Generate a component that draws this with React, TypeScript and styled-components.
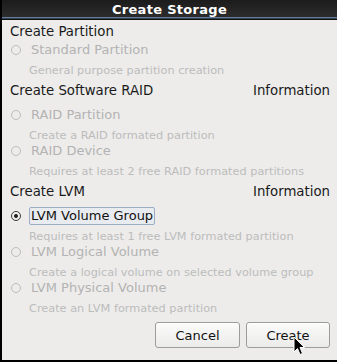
import React from "react";
import styled, { createGlobalStyle, css } from "styled-components";

const Global = createGlobalStyle`
  html, body { margin: 0; padding: 0; background: #ffffff; }
  body { font-family: "DejaVu Sans", "Liberation Sans", sans-serif; }
  * { box-sizing: border-box; }
`;

const Window = styled.div`
  width: 337px;
  height: 362px;
  display: flex;
  flex-direction: column;
  border-left: 2px solid #000;
  border-bottom: 2px solid #000;
  background: #edeceb;
`;

const TitleBar = styled.div`
  height: 20px;
  flex: none;
  display: flex;
  align-items: center;
  justify-content: center;
  padding-bottom: 2px;
  color: #ffffff;
  font-weight: bold;
  font-size: 13px;
  letter-spacing: 0.3px;
  background: linear-gradient(
    to bottom,
    #1c1c1c 0px,
    #2c2c2c 17px,
    #6f88a4 17px,
    #55708e 18px,
    #101010 19px,
    #101010 20px
  );
`;

const Body = styled.div`
  flex: 1;
  display: flex;
  flex-direction: column;
  padding: 1px 7px 0 8px;
  color: #000;
`;

const HeaderRow = styled.div<{ $gap?: number }>`
  height: 20px;
  margin-top: ${(p) => p.$gap ?? 0}px;
  display: flex;
  align-items: center;
  justify-content: space-between;
  font-size: 13.3px;
  color: #1a1a1a;
`;

const RadioRow = styled.div<{ $gap: number }>`
  height: 16px;
  margin-top: ${(p) => p.$gap}px;
  display: flex;
  align-items: center;
`;

const RadioCircle = styled.span<{ $checked?: boolean }>`
  width: 10px;
  height: 10px;
  margin-left: 1px;
  margin-right: 8px;
  border-radius: 50%;
  flex: none;
  position: relative;
  ${(p) =>
    p.$checked
      ? css`
          border: 1px solid #3a3a3a;
          background: radial-gradient(circle at 50% 40%, #ffffff, #e4e4e4);
          &::after {
            content: "";
            position: absolute;
            left: 2px;
            top: 2px;
            width: 4px;
            height: 4px;
            border-radius: 50%;
            background: #1c1c1c;
          }
        `
      : css`
          border: 1px solid #bdbdbc;
          background: transparent;
        `}
`;

const RadioLabel = styled.span<{ $disabled?: boolean; $focused?: boolean }>`
  font-size: 13px;
  line-height: 14px;
  padding: 1px;
  border-radius: 2px;
  border: 1px solid transparent;
  color: ${(p) => (p.$disabled ? "#b3b3b2" : "#111")};
  ${(p) =>
    p.$focused &&
    css`
      border-color: #9badc4;
      background: #e8ebef;
    `}
`;

const Desc = styled.div`
  height: 16px;
  margin-top: 4px;
  padding-left: 19px;
  display: flex;
  align-items: center;
  font-size: 11.3px;
  color: #bcbcbb;
  white-space: nowrap;
`;

const ButtonRow = styled.div`
  display: flex;
  justify-content: flex-end;
  gap: 6px;
  margin-top: 6px;
`;

const Button = styled.button<{ $w: number }>`
  position: relative;
  width: ${(p) => p.$w}px;
  height: 26px;
  border: 1px solid #9c9c9b;
  border-radius: 3px;
  background: linear-gradient(to bottom, #fbfbfb, #ebebea);
  font-family: "DejaVu Sans", "Liberation Sans", sans-serif;
  font-size: 13px;
  color: #111;
  padding: 0;
  box-shadow: inset 0 1px 0 #ffffff;
`;

const Cursor = styled.svg`
  position: absolute;
  left: 46px;
  top: 13px;
  width: 13px;
  height: 20px;
  pointer-events: none;
`;

type OptionProps = {
  label: string;
  desc: string;
  gap: number;
  checked?: boolean;
};

function Option({ label, desc, gap, checked }: OptionProps) {
  return (
    <>
      <RadioRow $gap={gap}>
        <RadioCircle $checked={checked} />
        <RadioLabel $disabled={!checked} $focused={checked}>
          {label}
        </RadioLabel>
      </RadioRow>
      <Desc>{desc}</Desc>
    </>
  );
}

export default function App() {
  return (
    <>
      <Global />
      <Window>
        <TitleBar>Create Storage</TitleBar>
        <Body>
          <HeaderRow>
            <span>Create Partition</span>
          </HeaderRow>
          <Option gap={1} label="Standard Partition" desc="General purpose partition creation" />

          <HeaderRow $gap={2}>
            <span>Create Software RAID</span>
            <span>Information</span>
          </HeaderRow>
          <Option gap={7} label="RAID Partition" desc="Create a RAID formated partition" />
          <Option gap={0} label="RAID Device" desc="Requires at least 2 free RAID formated partitions" />

          <HeaderRow $gap={2}>
            <span>Create LVM</span>
            <span>Information</span>
          </HeaderRow>
          <Option gap={7} checked label="LVM Volume Group" desc="Requires at least 1 free LVM formated partition" />
          <Option gap={0} label="LVM Logical Volume" desc="Create a logical volume on selected volume group" />
          <Option gap={0} label="LVM Physical Volume" desc="Create an LVM formated partition" />

          <ButtonRow>
            <Button $w={85}>Cancel</Button>
            <Button $w={84}>
              Create
              <Cursor viewBox="0 0 13 20">
                <path
                  d="M1 1 L1 16 L4.5 12.5 L7 18.5 L9.5 17.5 L7 11.5 L11.5 11.5 Z"
                  fill="#000"
                  stroke="#fff"
                  strokeWidth="1"
                  strokeLinejoin="round"
                />
              </Cursor>
            </Button>
          </ButtonRow>
        </Body>
      </Window>
    </>
  );
}
